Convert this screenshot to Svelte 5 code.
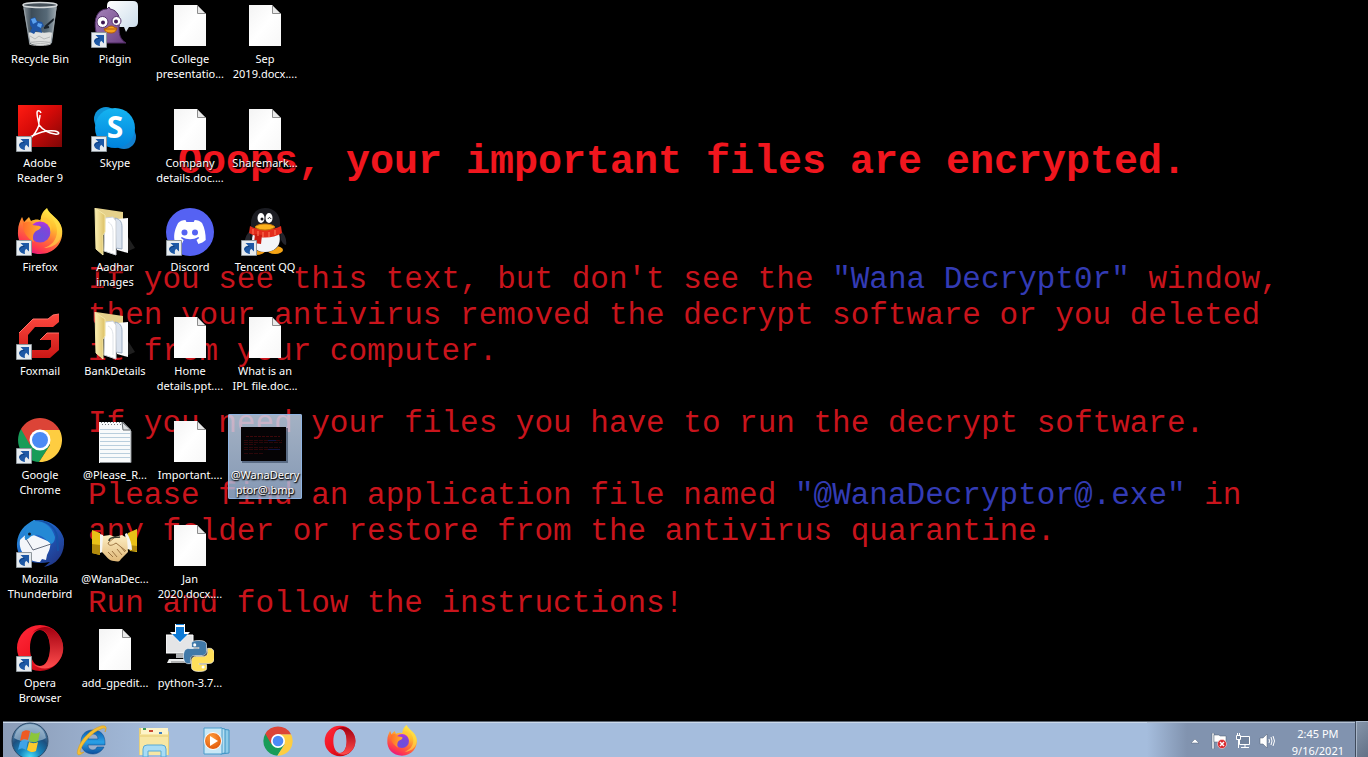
<script lang="ts">
	type DesktopItem = { icon: string; label: string; shortcut?: boolean };

	// the grid fills column by column, seven icons in each
	const items: DesktopItem[] = [
		{ icon: 'bin', label: 'Recycle Bin' },
		{ icon: 'adobe', label: 'Adobe\nReader 9', shortcut: true },
		{ icon: 'firefox', label: 'Firefox', shortcut: true },
		{ icon: 'foxmail', label: 'Foxmail', shortcut: true },
		{ icon: 'chrome', label: 'Google\nChrome', shortcut: true },
		{ icon: 'thunderbird', label: 'Mozilla\nThunderbird', shortcut: true },
		{ icon: 'opera', label: 'Opera\nBrowser', shortcut: true },
		{ icon: 'pidgin', label: 'Pidgin', shortcut: true },
		{ icon: 'skype', label: 'Skype', shortcut: true },
		{ icon: 'folder', label: 'Aadhar\nimages' },
		{ icon: 'folder', label: 'BankDetails' },
		{ icon: 'notepad', label: '@Please_R...' },
		{ icon: 'handshake', label: '@WanaDec...' },
		{ icon: 'file', label: 'add_gpedit...' },
		{ icon: 'file', label: 'College\npresentatio...' },
		{ icon: 'file', label: 'Company\ndetails.doc....' },
		{ icon: 'discord', label: 'Discord', shortcut: true },
		{ icon: 'file', label: 'Home\ndetails.ppt....' },
		{ icon: 'file', label: 'Important....' },
		{ icon: 'file', label: 'Jan\n2020.docx....' },
		{ icon: 'python', label: 'python-3.7...' },
		{ icon: 'file', label: 'Sep\n2019.docx....' },
		{ icon: 'file', label: 'Sharemark...' },
		{ icon: 'qq', label: 'Tencent QQ', shortcut: true },
		{ icon: 'file', label: 'What is an\nIPL file.doc...' },
		{ icon: 'bitmap', label: '@WanaDecry\nptor@.bmp' }
	];

	const pinned = [
		{ icon: 'ie', title: 'Internet Explorer' },
		{ icon: 'explorer', title: 'Windows Explorer' },
		{ icon: 'player', title: 'Windows Media Player' },
		{ icon: 'chrome', title: 'Google Chrome' },
		{ icon: 'opera', title: 'Opera' },
		{ icon: 'firefox', title: 'Firefox' }
	];

	let selected = $state(25);
</script>

<svg class="sprite" width="0" height="0" aria-hidden="true">
	<defs>
		<linearGradient id="g-glass" x1="0" x2="1" y1="0" y2="0">
			<stop offset="0" stop-color="#8c969c" /><stop offset=".25" stop-color="#3d4c58" />
			<stop offset=".7" stop-color="#566977" /><stop offset="1" stop-color="#a3adb3" />
		</linearGradient>
		<linearGradient id="g-adobe" x1="0" x2="1" y1="0" y2="1">
			<stop offset="0" stop-color="#ff1c12" /><stop offset=".45" stop-color="#d50a08" /><stop offset="1" stop-color="#7d0606" />
		</linearGradient>
		<linearGradient id="g-fox" x1=".8" x2=".3" y1="0" y2="1">
			<stop offset="0" stop-color="#fff44f" /><stop offset=".35" stop-color="#ffbd2e" />
			<stop offset=".6" stop-color="#ff7139" /><stop offset=".85" stop-color="#ff3750" /><stop offset="1" stop-color="#e31587" />
		</linearGradient>
		<linearGradient id="g-foxhead" x1="0" x2="1" y1="0" y2="0">
			<stop offset="0" stop-color="#ff6a2b" /><stop offset="1" stop-color="#ffb02e" />
		</linearGradient>
		<radialGradient id="g-globe" cx=".55" cy=".7" r=".7">
			<stop offset="0" stop-color="#6a50dc" /><stop offset=".6" stop-color="#8045d8" /><stop offset="1" stop-color="#b833e1" />
		</radialGradient>
		<linearGradient id="g-foxmail" x1="0" x2="0" y1="0" y2="1">
			<stop offset="0" stop-color="#ff4a40" /><stop offset="1" stop-color="#cc1715" />
		</linearGradient>
		<linearGradient id="g-opera" x1="0" x2="1" y1="0" y2="1">
			<stop offset="0" stop-color="#ff2a3a" /><stop offset=".5" stop-color="#f01422" /><stop offset="1" stop-color="#a0000e" />
		</linearGradient>
		<linearGradient id="g-opera2" x1="0" x2="0" y1="0" y2="1">
			<stop offset="0" stop-color="#a30010" /><stop offset="1" stop-color="#ff4d4d" />
		</linearGradient>
		<linearGradient id="g-skype" x1="0" x2="0" y1="0" y2="1">
			<stop offset="0" stop-color="#15b4f1" /><stop offset="1" stop-color="#0082dc" />
		</linearGradient>
		<linearGradient id="g-bird" x1="0" x2="1" y1="0" y2="1">
			<stop offset="0" stop-color="#a584ba" /><stop offset="1" stop-color="#6b3f82" />
		</linearGradient>
		<linearGradient id="g-bubble" x1="0" x2="1" y1="0" y2="1">
			<stop offset="0" stop-color="#fff" /><stop offset="1" stop-color="#c9dbea" />
		</linearGradient>
		<linearGradient id="g-paper" x1="0" x2="1" y1="0" y2="1">
			<stop offset="0" stop-color="#f4f4f4" /><stop offset=".5" stop-color="#fff" /><stop offset="1" stop-color="#f7f7f7" />
		</linearGradient>
		<linearGradient id="g-folder" x1="0" x2="1" y1="0" y2="0">
			<stop offset="0" stop-color="#fbf0b4" /><stop offset="1" stop-color="#dcc065" />
		</linearGradient>
		<linearGradient id="g-thunder" x1="0" x2="1" y1="0" y2="1">
			<stop offset="0" stop-color="#2aa1e4" /><stop offset=".45" stop-color="#1f5fc4" /><stop offset="1" stop-color="#222c77" />
		</linearGradient>
		<radialGradient id="g-orb" cx=".5" cy=".95" r=".85">
			<stop offset="0" stop-color="#49e0fa" /><stop offset=".35" stop-color="#1583bb" />
			<stop offset=".7" stop-color="#1d4f7e" /><stop offset="1" stop-color="#5e87ab" />
		</radialGradient>
		<linearGradient id="g-ie" x1="0" x2="0" y1="0" y2="1">
			<stop offset="0" stop-color="#0b5bab" /><stop offset=".5" stop-color="#2aa0e6" /><stop offset="1" stop-color="#0a4e9c" />
		</linearGradient>
		<radialGradient id="g-play" cx=".4" cy=".3" r=".8">
			<stop offset="0" stop-color="#ff9d3c" /><stop offset="1" stop-color="#dd4f05" />
		</radialGradient>
		<linearGradient id="g-hand" x1="0" x2="0" y1="0" y2="1">
			<stop offset="0" stop-color="#fdeec2" /><stop offset="1" stop-color="#e0b878" />
		</linearGradient>
	</defs>

	<symbol id="shortcut" viewBox="0 0 16 16">
		<path d="M.5.5h15v15H.5z" fill="#e6ebef" stroke="#8f979d" />
		<path d="M4.500 3H13v8.500l-2.800-2.700C9 10 8.400 11.500 9 14 5 13.500 2.700 11 3.200 8.500 3.700 6.800 5.500 6 7.300 5.800z" fill="#1d58a5" />
		<path d="M3.500 9.500c.8-2 2.500-3 5-3.200" fill="none" stroke="#0d3d7e" />
	</symbol>

	<symbol id="bin" viewBox="0 0 48 48">
		<path d="M7 5l6 38c3 3 20 3 23 0l5-38z" fill="url(#g-glass)" />
		<path d="M12 33l2 10c4 3 18 3 21 0l2-10c-5-2-8 1-12-1-4 1-8-1-13 1z" fill="#dfe0df" />
		<path d="M14 36l5 3 4-3 5 3 6-2M15 42c5 2 14 2 19 0" fill="none" stroke="#b9bbbb" />
		<path d="M14 19l5-2 2 4 5 1 2 4-3 2 1 5-6-2-2 3-4-2 2-4-2-3z" fill="#1e54a4" />
		<path d="M15 19l4-1 2 4-4 2zM22 23l4 1-1 4-4-2z" fill="#5aa0ee" />
		<path d="M29 27l9-8M28 28l5-1" stroke="#1a232c" stroke-width="2" />
		<ellipse cx="24" cy="5" rx="17" ry="2.500" fill="#46515a" stroke="#d4d8da" stroke-width="1.500" />
		<path d="M8 8l6 35M40 8l-5 35" stroke="#9aa3a9" stroke-width="1" />
		<ellipse cx="24" cy="43.500" rx="11" ry="2" fill="none" stroke="#b6b8b9" />
	</symbol>

	<symbol id="pidgin" viewBox="0 0 48 48">
		<path d="M20 1h22q5 0 5 5v16q0 5-5 5h-4l-3 5-2-5H21q-5 0-5-5V6q0-5 4-5z" fill="url(#g-bubble)" />
		<path d="M5 32C2 18 7 9 16 9l2-2 1 2c8 1 11 9 9 18 0 8 1 12 7 16H16z" fill="url(#g-bird)" stroke="#4e2b63" />
		<circle cx="11.500" cy="22" r="5.500" fill="#fff" stroke="#57336e" />
		<circle cx="25.500" cy="21" r="4.500" fill="#fff" stroke="#57336e" />
		<circle cx="12" cy="22.500" r="2" fill="#3c1652" /><circle cx="25" cy="21.500" r="2" fill="#3c1652" />
		<path d="M13 29c3 0 4-3 7-3s3 2 6 2c-1 4-3 5-6 5s-6-1-7-4z" fill="#f5a11c" stroke="#b0580c" />
		<path d="M14 29h12" stroke="#b0580c" />
	</symbol>

	<symbol id="file" viewBox="0 0 48 48">
		<path d="M8 5h23l9 9v32H8z" fill="url(#g-paper)" />
		<path d="M31.500 5.500v8h8z" fill="#e9e9e9" stroke="#8d8d8d" />
	</symbol>

	<symbol id="notepad" viewBox="0 0 48 48">
		<path d="M8 6h24l8 8v33H8z" fill="#f8fafb" />
		<path d="M9 46.500h31V15" fill="none" stroke="#8b9094" />
		<path d="M9 13.500h20M9 17.500h30M9 21.500h30M9 25.500h30M9 29.500h30M9 33.500h30M9 37.500h30M9 41.500h30" stroke="#b9cedd" />
		<path d="M10 6.500h21M11 8.500h20" stroke="#74797d" stroke-dasharray="1 2" />
		<path d="M31 6l1 8h8z" fill="#dadddf" stroke="#5f6468" />
	</symbol>

	<symbol id="adobe" viewBox="0 0 48 48">
		<path d="M2 1h44v42H2z" fill="url(#g-adobe)" />
		<path d="M25 9c-1-3-4-3-4 0 0 5 2 9 2 12-2 6-6 11-9 14-3 2-3-1 2-3 8-4 15-6 23-5 5 1 5 4 0 3-7-1-12-4-16-9-1-3 1-6 1-10" fill="none" stroke="#fff" stroke-width="1.500" />
	</symbol>

	<symbol id="skype" viewBox="0 0 48 48">
		<circle cx="15" cy="15" r="12" fill="#0f94d8" /><circle cx="33" cy="33" r="12" fill="#1380cf" />
		<circle cx="24" cy="24" r="20" fill="url(#g-skype)" />
		<text x="24" y="34" text-anchor="middle" font-family="Open Sans, sans-serif" font-size="30" font-weight="700" fill="#fff">S</text>
	</symbol>

	<symbol id="firefox" viewBox="0 0 48 48">
		<path d="M31 0c2 7 13 10 15 21 2 14-8 25-22 25S1 36 2 23C2 17 4 13 6 9l2 5 5-5 2 4c4-2 8-2 10 0-1-5 2-10 6-13z" fill="url(#g-fox)" />
		<circle cx="24" cy="24" r="10.500" fill="url(#g-globe)" />
		<path d="M6 9l2 6c5-2 7-2 9 2 3 1 6 0 8 2-1 3-4 3-6 5-3 3-2 8-1 10C11 30 7 24 7 17z" fill="url(#g-foxhead)" />
		<path d="M31 0c2 9 10 13 10 23 0 9-6 15-13 17 12 0 19-9 18-19C44 10 34 8 31 0z" fill="#ffe14a" opacity=".6" />
		<path d="M23 13c4-1 9 1 11 6 1 3 1 6-1 9 4-6 3-14-2-18-3-1-6 0-8 3z" fill="#ffc637" />
	</symbol>

	<symbol id="foxmail" viewBox="0 0 48 48">
		<path d="M43 2v8l-6 5H19l-7 8v12l4 3h16l3-3v-7H24l7-7h12v17l-9 8H16L3 36V21L17 7h15l5-4z" fill="url(#g-foxmail)" />
		<path d="M3 21L17 7h15l5-4 6-1M24 28l7-7h12" fill="none" stroke="#ff7168" />
	</symbol>

	<symbol id="chrome" viewBox="0 0 48 48">
		<path d="M24 24L5 13a22 22 0 0 0 18 33l11-17z" fill="#179c58" />
		<path d="M24 14h19.600A22 22 0 0 1 23 46l11-17z" fill="#fecd41" />
		<path d="M5 13l9 16 4-12 6-3h19.600L43 13A22 22 0 0 0 5 13z" fill="#dc4437" />
		<circle cx="24" cy="24" r="10.500" fill="#fff" /><circle cx="24" cy="24" r="8" fill="#4b8bf5" />
	</symbol>

	<symbol id="thunderbird" viewBox="0 0 48 48">
		<path d="M18 0c15-1 27 7 30 19 1 13-5 25-20 28l6-5C10 46 0 36 1 23 2 12 8 5 18 0z" fill="url(#g-thunder)" />
		<path d="M4 20c3-3 6-6 9-7l21 9c1 5-1 9-3 13l-1 5-4-1-2 3C12 42 2 32 4 20z" fill="#f4f6fa" />
		<path d="M9 17l8 13 18-6" fill="none" stroke="#626b7d" />
		<path d="M18 0C11 4 8 12 9 20c5-1 4-4 10-5 5-1 9 3 16 9 3-1 4-4 4-7C36 6 27 1 18 0z" fill="#2589d5" />
		<path d="M19 0c10 0 20 6 22 16l1 15" fill="none" stroke="#1451a6" stroke-width="2" />
		<circle cx="13.500" cy="14" r="1.500" fill="#101c2c" />
	</symbol>

	<symbol id="opera" viewBox="0 0 48 48">
		<path fill-rule="evenodd" d="M24 1a23 23 0 1 0 0 46 23 23 0 1 0 0-46zm0 5c6 0 10 8 10 18s-4 18-10 18-10-8-10-18S18 6 24 6z" fill="url(#g-opera)" />
		<path d="M16 9C23 2 32 1 39 7c11 9 11 25 0 34-6 5-16 5-23-2 4 3 8 4 12 2 4-3 6-10 6-17S32 9 28 7c-4-2-8-1-12 2z" fill="url(#g-opera2)" />
	</symbol>

	<symbol id="folder" viewBox="0 0 48 48">
		<path d="M33 45l11-5-7-11z" fill="#333" opacity=".6" />
		<path d="M5 0l27 4v8l-20 8z" fill="#e5d18b" />
		<path d="M26 11l11-1v35l-11-3z" fill="#fafbfc" />
		<path d="M24 10c5 1 7 4 7 9v22l-6-1z" fill="#dbe3ee" stroke="#9daec4" />
		<path d="M14 10l8-1 3 4v34l-12-4z" fill="#fff" stroke="#ccd0d5" />
		<path d="M17 14c4 2 5 6 5 10v19" fill="none" stroke="#dfe3e8" />
		<path d="M4 0l10 7v17l-2 3v20L5 41z" fill="url(#g-folder)" stroke="#f4e7a8" />
	</symbol>

	<symbol id="handshake" viewBox="0 0 48 48">
		<path d="M1 10l8 3v22l-8-2zM46 9l-9 4-2 8 4 10 7 1z" fill="#e8c117" />
		<path d="M1 24l8 1v10l-8-2zM46 26l-8-1 2 6h6z" fill="#b18a0d" />
		<path d="M9 14l3 1 2 16-5 2zM36 13l-2 1 2 15 5 1c0-6-2-11-5-17z" fill="#f5f5f2" />
		<path d="M12 16l7-1 5 2 7-2 5 3 1 14-7 7c-2 4-5 2-7 2-5 0-8-5-12-9z" fill="url(#g-hand)" />
		<path d="M24 17l-7 6c1 4 5 2 8 0l10 8M21 31l5 6M26 29l5 6M17 32l5 5M30 27l4 5" fill="none" stroke="#9c7442" />
		<path d="M18 21c0-5 8-3 11-4" fill="none" stroke="#3a3f32" stroke-width="1.500" />
	</symbol>

	<symbol id="discord" viewBox="0 0 48 48">
		<circle cx="24" cy="24" r="24" fill="#5562f3" />
		<path d="M19 12c-3 0-6 1-8 3-3 5-5 11-4 17 2 2 5 3 8 4l2-4-3-2 1-1c6 3 12 3 18 0l1 1-3 2 2 4c3-1 6-2 8-4 0-6-1-12-4-17-2-2-5-3-8-3l-1 2h-8z" transform="translate(2 0) scale(.92 1)" fill="#fff" />
		<circle cx="18.500" cy="24.500" r="3" fill="#5562f3" /><circle cx="29" cy="24.500" r="3" fill="#5562f3" />
	</symbol>

	<symbol id="qq" viewBox="0 0 48 48">
		<path d="M10 22c-5 4-7 10-6 15 2 0 4-3 5-5M39 22c5 4 7 10 6 15-2 0-4-3-5-5" fill="#24252c" />
		<ellipse cx="15" cy="43" rx="9" ry="4" fill="#f29a12" /><ellipse cx="34" cy="42" rx="8" ry="4" fill="#f5a415" />
		<path d="M24 0c10 0 15 7 15 15v9c3 12-3 20-15 20S7 36 10 24v-9C10 7 15 0 24 0z" fill="#1b1c22" />
		<path d="M12 26h26c3 10-3 18-14 18S9 36 12 26z" fill="#f3f5f9" />
		<path d="M9 18c9 5 21 5 31 0l1 7c-10 6-23 6-33 0z" fill="#e32c1c" />
		<path d="M14 26l7 1-1 9-7-1z" fill="#c81c12" />
		<path d="M12 21v5M17 23v5M22 24v5M28 24v5M34 22v5" stroke="#ff7c5e" />
		<ellipse cx="20" cy="10" rx="3.500" ry="5" fill="#fff" /><ellipse cx="28" cy="10" rx="3.500" ry="5" fill="#fff" />
		<circle cx="21" cy="11" r="1.500" fill="#15161b" /><path d="M27 11c1-2 2-2 3 0" fill="none" stroke="#15161b" />
		<path d="M14 19c3-4 17-4 20 0-4 4-16 4-20 0z" fill="#fbb11c" stroke="#c77808" />
	</symbol>

	<symbol id="bitmap" viewBox="0 0 48 48">
		<path d="M1 12h46v35H1z" fill="#22344e" opacity=".5" />
		<path d="M0 11h45v34H0z" fill="#050305" />
		<path d="M5 20.500h34" stroke="#3d080b" stroke-dasharray="3 1" />
		<path d="M3 24.500h24M35 24.500h6M3 26.500h38M3 28.500h12M3 31.500h36M3 33.500h24M3 37.500h20" stroke="#2c0609" stroke-dasharray="4 1" />
		<path d="M27 24.500h8M27 33.500h12" stroke="#101440" />
	</symbol>

	<symbol id="python" viewBox="0 0 48 48">
		<path d="M0 11h27v18H0z" fill="#e4e5e6" stroke="#fff" />
		<path d="M10 29h8v5h-8z" fill="#aeb1b4" /><path d="M3 35h17l-1 4H1z" fill="#eceded" />
		<path d="M5 38h14" stroke="#777" />
		<path d="M9 0h10v8h5L14 19 4 8h5z" fill="#fff" />
		<path d="M10 0h8v1h-8zM10 3h8v7h4l-8 8-8-8h4z" fill="#0e7bd6" />
		<g transform="translate(17.500 16.500) scale(1.290)">
			<path fill="#4179a8" stroke="#fff" stroke-width=".5" d="M14.250.18l.9.2.73.26.59.3.45.32.34.34.25.34.16.33.1.3.04.26.02.2-.01.13V8.500l-.05.63-.13.55-.21.46-.26.38-.3.31-.33.25-.35.19-.35.14-.33.1-.3.07-.26.04-.21.02H8.770l-.69.05-.59.14-.5.22-.41.27-.33.32-.27.35-.2.36-.15.37-.1.35-.07.32-.04.27-.02.21v3.060H3.170l-.21-.03-.28-.07-.32-.12-.35-.18-.36-.26-.36-.36-.35-.46-.32-.59-.28-.73-.21-.88-.14-1.050-.05-1.230.06-1.220.16-1.040.24-.87.32-.71.36-.57.4-.44.42-.33.42-.24.4-.16.36-.1.32-.05.24-.01h.16l.06.01h8.160v-.83H6.180l-.01-2.750-.02-.37.05-.34.11-.31.17-.28.25-.26.31-.23.38-.2.44-.18.51-.15.58-.12.64-.1.71-.06.77-.04.84-.02 1.270.05z" />
			<path fill="#ffdf5a" stroke="#fff" stroke-width=".5" d="M21.100 6.110l.28.06.32.12.35.18.36.27.36.35.35.47.32.59.28.73.21.88.14 1.040.05 1.230-.06 1.230-.16 1.040-.24.86-.32.71-.36.57-.4.45-.42.33-.42.24-.4.16-.36.09-.32.05-.24.02-.16-.01h-8.220v.82h5.840l.01 2.760.02.36-.05.34-.11.31-.17.29-.25.25-.31.24-.38.2-.44.17-.51.15-.58.13-.64.09-.71.07-.77.04-.84.01-1.270-.04-1.070-.14-.9-.2-.73-.25-.59-.3-.45-.33-.34-.34-.25-.34-.16-.33-.1-.3-.04-.25-.02-.2.01-.13v-5.340l.05-.64.13-.54.21-.46.26-.38.3-.32.33-.24.35-.2.35-.14.33-.1.3-.06.26-.04.21-.02.13-.01h5.840l.69-.05.59-.14.5-.21.41-.28.33-.32.27-.35.2-.36.15-.36.1-.35.07-.32.04-.28.02-.21V6.070h2.090l.14.01z" />
			<circle cx="8.700" cy="3.400" r="1.200" fill="#fff" /><circle cx="15.200" cy="20.600" r="1.200" fill="#fff" />
		</g>
	</symbol>

	<symbol id="orb" viewBox="0 0 40 40">
		<circle cx="20" cy="20" r="18" fill="url(#g-orb)" stroke="#2c4a69" />
		<path d="M4 17C6 7 13 3 20 3s14 4 16 14c-8 5-24 5-32 0z" fill="#cfe0ee" opacity=".5" />
		<path d="M12 11c3-2 5-2 8-1l-2 9c-3-1-5-1-8 1z" fill="#ee5a24" />
		<path d="M21 11c3 2 6 2 9 0l-2 9c-3 2-6 1-9 0z" fill="#8cc63a" />
		<path d="M10 21c3-2 5-2 8-1l-2 9c-3-2-5-2-8 0z" fill="#3fa3e8" />
		<path d="M19 21c3 1 5 2 9 0l-2 9c-3 2-6 1-9-1z" fill="#fdc92d" />
	</symbol>

	<symbol id="ie" viewBox="0 0 32 32">
		<path d="M29 18c0-8-4-13-12-13S5 10 5 17s4 12 12 12c5 0 9-3 11-7h-7c-1 2-2 3-4 3-3 0-5-2-5-5h17zm-17-4c0-3 2-5 5-5s5 2 5 5z" fill="url(#g-ie)" stroke="#0b4689" stroke-width=".5" />
		<path d="M8 27c-6 5-8 3-6-3C5 14 15 4 25 1c6-1 6 2 4 6 1-4 0-5-4-3C16 7 6 19 4 26c0 2 2 2 4 1z" fill="#f5bf34" stroke="#d79913" stroke-width=".5" />
	</symbol>

	<symbol id="explorer" viewBox="0 0 32 32">
		<path d="M1 3h10l2 3h17q1 0 1 2v22H1z" fill="#e6cf7c" />
		<path d="M3 3h27v8H3z" fill="#fdf4c9" />
		<path d="M5 3h3v2H5z" fill="#3e9a58" /><path d="M11 5h4v2h-4z" fill="#cb4a31" /><path d="M21 7h3v2h-3z" fill="#3f7fc2" />
		<path d="M2 9h28v21H2z" fill="#f7e7a4" /><path d="M2 10h28v2H2z" fill="#efd98a" />
		<path d="M5 32V24q0-4 4-4h15q4 0 4 4v8h-5v-6H10v6z" fill="#a8dcf5" stroke="#57a9d6" />
	</symbol>

	<symbol id="player" viewBox="0 0 32 32">
		<path d="M21 4l8 1v23l-8 1z" fill="#8fcbe8" stroke="#3f94c4" />
		<path d="M20 3l5 1v24l-5 1z" fill="#b5def1" stroke="#3f94c4" />
		<path d="M4 3h18v26H4z" fill="#c9e8f6" stroke="#4a9ccb" />
		<circle cx="13" cy="16" r="8.500" fill="url(#g-play)" stroke="#fff" />
		<path d="M10 11l8 5-8 5z" fill="#fff" />
	</symbol>
</svg>

<div class="screen">
	<main class="desktop">
		<div class="wallpaper">
			<h1>Ooops, your important files are encrypted.</h1>
			<p>If you see this text, but don't see the <em>"Wana Decrypt0r"</em> window,<br />
				then your antivirus removed the decrypt software or you deleted<br />
				it from your computer.</p>
			<p>If you need your files you have to run the decrypt software.</p>
			<p>Please find an application file named <em>"@WanaDecryptor@.exe"</em> in<br />
				any folder or restore from the antivirus quarantine.</p>
			<p>Run and follow the instructions!</p>
		</div>

		<div class="icons">
			{#each items as item, i}
				<button class="item" class:selected={selected === i} onclick={() => (selected = i)}>
					<span class="picture">
						<svg width="48" height="48" aria-hidden="true"><use href="#{item.icon}" /></svg>
						{#if item.shortcut}
							<svg class="arrow" width="16" height="16" aria-hidden="true"><use href="#shortcut" /></svg>
						{/if}
					</span>
					<span class="label">{item.label}</span>
				</button>
			{/each}
		</div>
	</main>

	<footer class="taskbar">
		<button class="start" aria-label="Start">
			<svg width="40" height="40"><use href="#orb" /></svg>
		</button>
		<nav class="pinned">
			{#each pinned as app}
				<button aria-label={app.title}>
					<svg width="32" height="32"><use href="#{app.icon}" /></svg>
				</button>
			{/each}
		</nav>

		<div class="tray">
			<button aria-label="Show hidden icons">
				<svg width="16" height="16" viewBox="0 0 16 16"><path d="M4 10l4-4 4 4z" fill="#fff" stroke="#56667e" stroke-width=".5" /></svg>
			</button>
			<button aria-label="Action Center">
				<svg width="16" height="16" viewBox="0 0 16 16">
					<path d="M1 0h2v16H1z" fill="#fff" stroke="#4f5c70" stroke-width=".5" />
					<path d="M3 2h5l1 1h6v7H8L7 9H3z" fill="#fff" stroke="#4f5c70" stroke-width=".5" />
					<circle cx="11" cy="11" r="4.500" fill="#d9262b" stroke="#fff" stroke-width=".5" />
					<path d="M9 9l4 4M13 9l-4 4" stroke="#fff" stroke-width="1.500" />
				</svg>
			</button>
			<button aria-label="Network">
				<svg width="16" height="16" viewBox="0 0 16 16">
					<path d="M4.500 3.500h10v8h-10zM6 14.500h8M10 12v2" fill="#71829c" stroke="#fff" />
					<path d="M1.500 2.500h4v4h-4zM2.500 0v2M4.500 0v2M3.500 7v8" fill="#71829c" stroke="#fff" />
				</svg>
			</button>
			<button aria-label="Volume">
				<svg width="16" height="16" viewBox="0 0 16 16">
					<path d="M1 5h3l4-4v14l-4-4H1z" fill="#fff" stroke="#4f5c70" stroke-width=".5" />
					<path d="M10 6q1 2 0 4M12 4q2 4 0 8M14 3q3 5 0 10" fill="none" stroke="#fff" />
				</svg>
			</button>
			<time class="clock" datetime="2021-09-16T14:45">2:45 PM<br />9/16/2021</time>
			<button class="peek" aria-label="Show desktop"></button>
		</div>
	</footer>
</div>

<style>
	:global(body) {
		background: #000;
	}

	.sprite {
		position: absolute;
	}

	.screen {
		display: grid;
		grid-template-rows: 1fr 36px;
		height: 100vh;
		overflow: hidden;
		background: #000;
		color: #fff;
		font-family: 'Noto Sans', 'Open Sans', sans-serif;
		font-size: 11px;
	}

	button {
		padding: 0;
		border: 0;
		background: none;
		color: inherit;
		font: inherit;
	}

	svg {
		display: block;
	}

	.desktop {
		display: grid;
		min-height: 0;
		overflow: hidden;
	}

	/* the icons lie over the wallpaper in the same grid cell */
	.wallpaper,
	.icons {
		grid-area: 1 / 1;
		min-width: 0;
	}

	.wallpaper {
		padding: 139px 4px 0 88px;
		font-family: 'Courier New', 'Liberation Mono', monospace;
		color: #c9141c;
		white-space: nowrap;
	}

	h1 {
		margin: 0 0 75px -88px;
		font-size: 40px;
		line-height: 48px;
		text-align: center;
		color: #f0161e;
	}

	p {
		margin: 0 0 36px;
		font-size: 31px;
		line-height: 36px;
	}

	em {
		font-style: normal;
		color: #333bb4;
	}

	.icons {
		display: grid;
		grid-template-rows: repeat(7, 104px);
		grid-auto-columns: 74px;
		grid-auto-flow: column;
		column-gap: 1px;
		justify-content: start;
		align-items: start;
		margin-top: -2px;
		padding-left: 3px;
	}

	.item {
		display: flex;
		flex-direction: column;
		align-items: center;
		gap: 3px;
		padding: 2px 0;
	}

	.item.selected {
		border-radius: 2px;
		background: linear-gradient(rgba(205, 222, 245, 0.8), rgba(165, 190, 225, 0.8));
		box-shadow: inset 0 0 0 1px #8fb4e2;
	}

	.picture {
		position: relative;
	}

	.arrow {
		position: absolute;
		left: 0;
		bottom: 0;
	}

	.label {
		line-height: 15px;
		white-space: pre;
		text-align: center;
		text-shadow: 0 1px 2px #000, 1px 1px 1px #000;
	}

	.taskbar {
		display: flex;
		align-items: flex-start;
		margin-left: 3px;
		overflow: hidden;
		background: linear-gradient(90deg, #8b9cb7, #a5bddd 160px);
		box-shadow: inset 0 1px #59636f, inset 0 2px #ccdaeb;
	}

	.start {
		padding: 0 7px;
	}

	.pinned {
		display: flex;
		flex: 1;
		padding-left: 4px;
	}

	.pinned button {
		display: grid;
		place-items: center;
		width: 62px;
		height: 40px;
	}

	.tray {
		display: flex;
		align-items: center;
		gap: 8px;
		height: 40px;
		padding-left: 40px;
		background: linear-gradient(90deg, transparent, #8193af 40px);
		box-shadow: inset 0 1px #59636f, inset 0 2px #b4c1d3;
	}

	.clock {
		padding: 2px 3px 0 9px;
		line-height: 17px;
		text-align: center;
	}

	.peek {
		align-self: stretch;
		width: 13px;
		border-left: 1px solid #3f4a5b;
		background: linear-gradient(135deg, #8796ab, #5f6e83);
		box-shadow: inset 1px 1px #a9b6c8;
	}
</style>
